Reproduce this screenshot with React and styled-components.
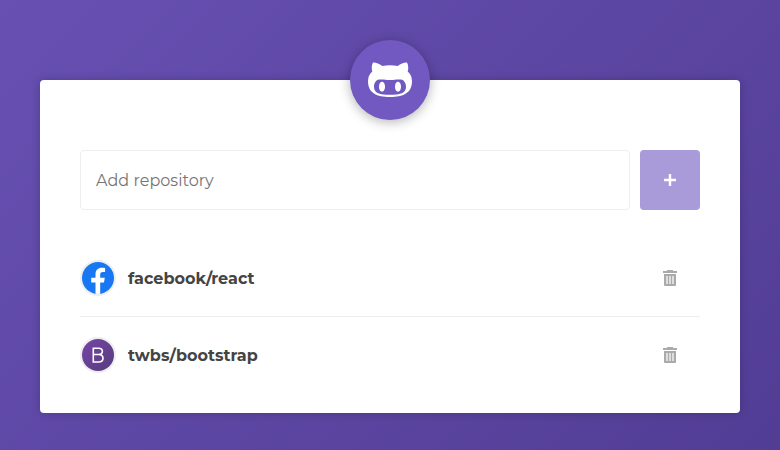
import React from 'react';
import styled, { createGlobalStyle } from 'styled-components';

const GlobalStyle = createGlobalStyle`
  * { box-sizing: border-box; margin: 0; padding: 0; }
  html, body, #root { height: 100%; }
  body {
    overflow: hidden;
    font: 400 16px Montserrat, Inter, "Liberation Sans", sans-serif;
    color: #444;
  }
  input, button { font-family: inherit; }
`;

const Page = styled.div`
  min-height: 450px;
  height: 100%;
  padding: 80px 40px 37px;
  background: linear-gradient(135deg, #6750b2 0%, #523d95 100%);
`;

const Card = styled.main`
  display: flex;
  flex-direction: column;
  height: 333px;
  padding: 0 40px;
  border-radius: 4px;
  background: #fff;
  box-shadow: 0 0 10px rgba(0, 0, 0, 0.2);
`;

const Logo = styled.div`
  display: flex;
  align-items: center;
  justify-content: center;
  align-self: center;
  flex: none;
  width: 80px;
  height: 80px;
  margin: -40px 0 30px;
  border-radius: 50%;
  background: #7159c1;
  box-shadow: 0 2px 12px rgba(0, 0, 0, 0.3);
`;

const Form = styled.form`
  display: flex;
  gap: 10px;
  height: 60px;
  flex: none;
`;

const RepoInput = styled.input`
  flex: 1;
  min-width: 0;
  padding: 0 15px;
  border: 1px solid #eee;
  border-radius: 4px;
  outline: 0;
  background: #fff;
  font-size: 16px;
  letter-spacing: 0.04px;
  &::placeholder { color: #757575; opacity: 1; }
`;

const AddButton = styled.button`
  display: flex;
  align-items: center;
  justify-content: center;
  width: 60px;
  border: 0;
  border-radius: 4px;
  background: #7159c1;
  opacity: 0.6;
`;

const List = styled.ul`
  list-style: none;
  margin-top: 30px;
`;

const Row = styled.li`
  display: flex;
  align-items: center;
  height: 76px;
  & + & {
    height: 77px;
    border-top: 1px solid #eee;
  }
`;

const Avatar = styled.span`
  display: block;
  width: 36px;
  height: 36px;
  margin-right: 12px;
  border: 2px solid #eee;
  border-radius: 50%;
  overflow: hidden;
  svg { display: block; }
`;

const RepoName = styled.strong`
  flex: 1;
  font-size: 16px;
  font-weight: 700;
  letter-spacing: 0.02px;
`;

const RemoveButton = styled.button`
  display: flex;
  align-items: center;
  justify-content: center;
  width: 60px;
  height: 60px;
  border: 0;
  background: transparent;
`;

const OctofaceIcon = () => (
  <svg width="44" height="36" viewBox="0 0 44 36" fill="#fff">
    <path
      fillRule="evenodd"
      d="M5 .6c3-.2 6.3 1.3 9.2 3.4Q22 2.4 29.8 4C32.7 1.9 36 .4 39 .6c1.5 2.9 1.6 6 .7 8.8Q44 13 44 19.2C44 31 35 35 22 35S0 31 0 19.2Q0 13 4.3 9.4C3.4 6.6 3.5 3.5 5 .6zM22 18c-4 0-8-1-11-.4-3 .6-5 3.6-5 7.2 0 6.5 6 8 16 8s16-1.5 16-8c0-3.6-2-6.6-5-7.2-3-.6-7 .4-11 .4z"
    />
    <ellipse cx="14" cy="24.8" rx="3" ry="5" />
    <ellipse cx="30" cy="24.8" rx="3" ry="5" />
  </svg>
);

const PlusIcon = () => (
  <svg width="14" height="14" viewBox="0 0 14 14" fill="#fff">
    <path d="M5.8 1h2.4v4.8H13v2.4H8.2V13H5.8V8.2H1V5.8h4.8z" />
  </svg>
);

const TrashIcon = () => (
  <svg width="16" height="16" viewBox="0 0 16 16" fill="#aaa">
    <path d="M5 0h6v1h4v2H1V1h4z" />
    <path d="M2 4h12v11q0 1-1 1H3q-1 0-1-1z" />
    <path fill="#dedede" d="M4 6h2v8H4zM7 6h2v8H7zM10 6h2v8h-2z" />
  </svg>
);

const FacebookAvatar = () => (
  <svg width="32" height="32" viewBox="0 0 32 32">
    <rect width="32" height="32" fill="#1877f2" />
    <path fill="#fff" d="M13.5 32V20.4H9.2v-4.7h4.3v-3.5c0-4.2 2.5-6.4 6.3-6.4 1.3 0 2.2.1 3.3.3v4h-2.2c-2.1 0-2.7 1.1-2.7 2.6v3h4.6l-.8 4.7h-3.8V32z" />
  </svg>
);

const BootstrapAvatar = () => (
  <svg width="32" height="32" viewBox="0 0 32 32">
    <defs>
      <linearGradient id="bootstrap-bg" x1="0" y1="0" x2="1" y2="1">
        <stop offset="0" stopColor="#7744a8" />
        <stop offset="1" stopColor="#563d7c" />
      </linearGradient>
    </defs>
    <rect width="32" height="32" fill="url(#bootstrap-bg)" />
    <path
      fill="none"
      stroke="#fff"
      strokeWidth="1.6"
      d="M11.3 9.2h5.2c2.6 0 3.9 1.1 3.9 3.1s-1.3 3.2-3.9 3.2h-5.200M16.500 15.500c2.900 0 4.500 1.300 4.500 3.700s-1.600 3.800-4.500 3.800h-5.200V8.400"
    />
  </svg>
);

const repositories = [
  { name: 'facebook/react', avatar: <FacebookAvatar /> },
  { name: 'twbs/bootstrap', avatar: <BootstrapAvatar /> },
];

export default function App() {
  return (
    <>
      <GlobalStyle />
      <Page>
        <Card>
          <Logo><OctofaceIcon /></Logo>
          <Form onSubmit={(event) => event.preventDefault()}>
            <RepoInput placeholder="Add repository" />
            <AddButton type="submit" aria-label="Add"><PlusIcon /></AddButton>
          </Form>
          <List>
            {repositories.map(({ name, avatar }) => (
              <Row key={name}>
                <Avatar>{avatar}</Avatar>
                <RepoName>{name}</RepoName>
                <RemoveButton type="button" aria-label={`Remove ${name}`}><TrashIcon /></RemoveButton>
              </Row>
            ))}
          </List>
        </Card>
      </Page>
    </>
  );
}
